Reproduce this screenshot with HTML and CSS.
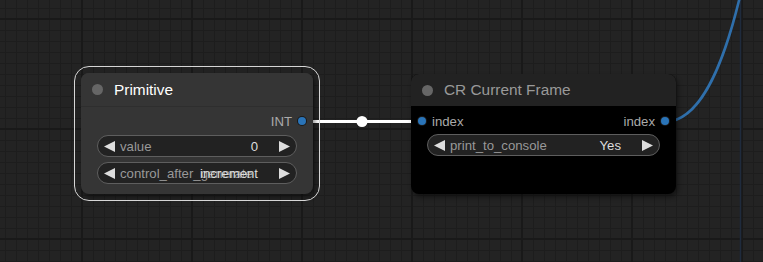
FILE: index.html
```html
<!DOCTYPE html>
<html>
<head>
    <title>Graph</title>
    <link rel="stylesheet" href="styles.css">
</head>
<body>
    <div class="canvas">
        <!-- links -->
        <svg class="links" width="763" height="262" viewBox="0 0 763 262">
            <line x1="740.5" y1="0" x2="740.5" y2="262" stroke="#1f2b3d" stroke-width="1.5"/>
            <path d="M672 121 C702 114 724 66 742 -12" fill="none" stroke="#2f6fab" stroke-width="2.6"/>
            <line x1="304" y1="121.5" x2="420" y2="121.5" stroke="#fff" stroke-width="3"/>
            <circle cx="362" cy="121.5" r="5.5" fill="#fff"/>
        </svg>

        <div class="node primitive selected">
            <div class="title">
                <span class="dot"></span>
                <span class="name">Primitive</span>
            </div>
            <div class="body">
                <div class="slots">
                    <span></span>
                    <span class="slot out">INT <i class="pin"></i></span>
                </div>
                <div class="widget">
                    <svg class="arrow" width="11" height="11" viewBox="0 0 11 11"><polygon points="0,5.5 11,0 11,11" /></svg>
                    <div class="wtext">
                        <span class="label">value</span>
                        <span class="value">0</span>
                    </div>
                    <svg class="arrow" width="11" height="11" viewBox="0 0 11 11"><polygon points="11,5.5 0,0 0,11" /></svg>
                </div>
                <div class="widget">
                    <svg class="arrow" width="11" height="11" viewBox="0 0 11 11"><polygon points="0,5.5 11,0 11,11" /></svg>
                    <div class="wtext">
                        <span class="label">control_after_generate</span>
                        <span class="value">increment</span>
                    </div>
                    <svg class="arrow" width="11" height="11" viewBox="0 0 11 11"><polygon points="11,5.5 0,0 0,11" /></svg>
                </div>
            </div>
        </div>

        <div class="node frame">
            <div class="title">
                <span class="dot"></span>
                <span class="name">CR Current Frame</span>
            </div>
            <div class="body">
                <div class="slots">
                    <span class="slot in"><i class="pin"></i> index</span>
                    <span class="slot out">index <i class="pin"></i></span>
                </div>
                <div class="widget">
                    <svg class="arrow" width="11" height="11" viewBox="0 0 11 11"><polygon points="0,5.5 11,0 11,11" /></svg>
                    <div class="wtext">
                        <span class="label">print_to_console</span>
                        <span class="value">Yes</span>
                    </div>
                    <svg class="arrow" width="11" height="11" viewBox="0 0 11 11"><polygon points="11,5.5 0,0 0,11" /></svg>
                </div>
            </div>
        </div>
    </div>
</body>
</html>
```

FILE: styles.css
```css
html, body { margin: 0; padding: 0; }
body { font-family: "Liberation Sans", Arial, sans-serif; background: #222; overflow: hidden; }

.canvas {
    position: relative;
    width: 763px;
    height: 262px;
    overflow: hidden;
    background-color: #232323;
    background-image:
        linear-gradient(90deg, #191919 0 2px, transparent 2px),
        linear-gradient(180deg, #191919 0 2px, transparent 2px),
        linear-gradient(90deg, #1d1d1d 0 1px, transparent 1px),
        linear-gradient(180deg, #1d1d1d 0 1px, transparent 1px);
    background-size: 110px 110px, 110px 110px, 11px 11px, 11px 11px;
    background-position: 81px 0, 0 18px, 5px 0, 0 8px;
}

.links { position: absolute; left: 0; top: 0; }

/* nodes sit on a free canvas */
.node {
    position: absolute;
    display: flex;
    flex-direction: column;
    border-radius: 8px;
    box-shadow: 2px 3px 5px rgba(0, 0, 0, 0.45);
}
.node.selected { outline: 1.5px solid #d6d6d6; outline-offset: 6px; }

.primitive { left: 81px; top: 73px; width: 232px; height: 121px; background: #353535; }
.frame { left: 411px; top: 74px; width: 265px; height: 120px; background: #000; }

.title {
    height: 33px;
    display: flex;
    align-items: center;
    padding-left: 11px;
    border-radius: 8px 8px 0 0;
    flex-shrink: 0;
}
.primitive .title { background: #353535; border-bottom: 1px solid #2e2e2e; height: 33px; }
.frame .title { background: #222; height: 32px; }

.dot { width: 11px; height: 11px; border-radius: 50%; background: #666; margin-right: 11px; }
.name { font-size: 15.4px; color: #999; }
.primitive .name { color: #fff; }

.body { display: flex; flex-direction: column; padding: 4px 16px 0; }
.frame .body { padding-top: 5px; }

.slots {
    height: 20px;
    display: flex;
    justify-content: space-between;
    align-items: center;
    font-size: 13.2px;
    color: #aaa;
    margin: 0 -9px 4px;
}
.frame .slots { margin-bottom: 3px; }
.slot { display: flex; align-items: center; gap: 6px; }
.pin {
    width: 8px;
    height: 8px;
    border-radius: 50%;
    background: #2a74b8;
    box-shadow: 0 0 0 1px #1a1a1a;
}

.widget {
    height: 20px;
    display: flex;
    align-items: center;
    border: 1px solid #5e5e5e;
    border-radius: 11px;
    background: #222;
    padding: 0 6px;
    font-size: 13.2px;
    margin-bottom: 5px;
}
.arrow { fill: #ddd; flex-shrink: 0; }
.wtext { flex: 1; display: grid; margin: 0 21px 0 5px; }
.wtext span { grid-area: 1 / 1; white-space: nowrap; }
.label { color: #999; }
.value { color: #ddd; justify-self: end; }
```
